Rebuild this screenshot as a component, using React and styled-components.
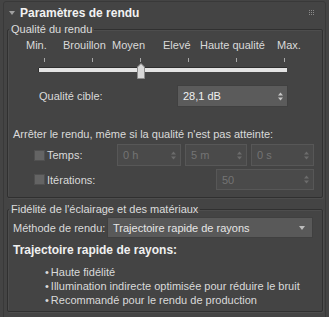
import React from "react";
import styled, { createGlobalStyle } from "styled-components";

const GlobalStyle = createGlobalStyle`
  html, body {
    margin: 0;
    padding: 0;
    background: #444444;
  }
  body {
    font-family: "Liberation Sans", Arial, sans-serif;
    font-size: 11px;
    color: #dadada;
  }
`;

const Page = styled.div`
  width: 329px;
  height: 317px;
  background: #444444;
  overflow: hidden;
  padding-top: 1px;
  box-sizing: border-box;
`;

const Rollout = styled.div`
  margin-left: 3px;
  width: 323px;
  height: 320px;
  box-sizing: border-box;
  border: 1px solid #393939;
  border-radius: 3px 3px 0 0;
`;

const Header = styled.div`
  height: 21px;
  display: flex;
  align-items: center;
  padding: 0 5px 0 5px;
`;

const Caret = styled.svg`
  width: 6px;
  height: 4px;
  margin-right: 5px;
  flex: none;
`;

const HeaderTitle = styled.div`
  font-size: 12px;
  font-weight: bold;
  color: #f2f2f2;
  flex: 1;
`;

const Grip = styled.svg`
  width: 5px;
  height: 5px;
  margin-right: 6px;
  margin-top: -1px;
`;

const Group = styled.fieldset`
  margin: ${(p) => p.$top || 0}px 0 0 3px;
  padding: 0 0 ${(p) => p.$bottom || 0}px 0;
  width: 316px;
  box-sizing: border-box;
  border: 1px solid #303030;
  border-radius: 2px;
  box-shadow: inset 1px 1px 0 #4d4d4d, 1px 1px 0 #4d4d4d;
  min-width: 0;
`;

const Legend = styled.legend`
  padding: 0 2px;
  margin-left: 1px;
  font-size: 11px;
  line-height: 13px;
  color: #dcdcdc;
`;

const Text = styled.div`
  line-height: 13px;
  margin-top: ${(p) => p.$top || 0}px;
  padding-left: ${(p) => p.$left || 0}px;
  white-space: nowrap;
`;

const LevelLabels = styled.div`
  display: grid;
  grid-template-columns: 37px 49px 51px 37px 77px auto;
  padding-left: 18px;
  margin-top: 3px;
  line-height: 13px;
  white-space: nowrap;
`;

const Ticks = styled.div`
  display: flex;
  gap: 47px;
  padding-left: 36px;
  margin-top: 6px;
  height: 4px;
`;

const Tick = styled.div`
  width: 1px;
  height: 4px;
  background: #a8a8a8;
`;

const Slider = styled.div`
  position: relative;
  margin: 1px 0 0 31px;
  width: 248px;
  height: 16px;
`;

const Track = styled.div`
  position: absolute;
  left: 0;
  right: 0;
  top: 5px;
  height: 4px;
  background: #e4e4e4;
  box-shadow: 0 -1px 0 #2e2e2e, -1px 0 0 #2e2e2e;
`;

const Thumb = styled.svg`
  position: absolute;
  left: 98px;
  top: 0;
  width: 8px;
  height: 16px;
`;

const Row = styled.div`
  display: flex;
  align-items: center;
  margin-top: ${(p) => p.$top || 0}px;
  padding-left: ${(p) => p.$left || 0}px;
  height: ${(p) => p.$h || 22}px;
`;

const Label = styled.div`
  width: ${(p) => p.$w}px;
  flex: none;
  white-space: nowrap;
`;

const Spinner = styled.div`
  width: ${(p) => p.$w}px;
  margin-left: ${(p) => p.$ml || 0}px;
  height: 100%;
  box-sizing: border-box;
  display: flex;
  align-items: center;
  justify-content: space-between;
  padding: 0 4px 0 5px;
  flex: none;
  background: ${(p) => (p.$disabled ? "#4a4a4a" : "#5b5b5b")};
  border: 1px solid ${(p) => (p.$disabled ? "#575757" : "#404040")};
  color: ${(p) => (p.$disabled ? "#747474" : "#f0f0f0")};
`;

const Arrows = styled.svg`
  width: 5px;
  height: 9px;
  flex: none;
`;

const Check = styled.div`
  width: 11px;
  height: 11px;
  box-sizing: border-box;
  background: #646464;
  border: 1px solid #505050;
  flex: none;
  margin-right: 2px;
`;

const Select = styled.div`
  width: 206px;
  height: 21px;
  box-sizing: border-box;
  display: flex;
  align-items: center;
  justify-content: space-between;
  padding: 0 7px 0 5px;
  background: #595959;
  border: 1px solid #404040;
  color: #e6e6e6;
`;

const Heading = styled.div`
  font-size: 12px;
  font-weight: bold;
  line-height: 14px;
  color: #f0f0f0;
  margin-top: 5px;
  padding-left: 5px;
`;

const Bullets = styled.ul`
  list-style: none;
  margin: 8px 0 4px 0;
  padding: 0 0 0 37px;
  line-height: 14px;
  white-space: nowrap;
`;

const Bullet = styled.li`
  &::before {
    content: "•";
    margin-right: 2px;
  }
`;

const SpinArrows = ({ dim }) => (
  <Arrows viewBox="0 0 5 9">
    <path d="M0 3.5 L2.5 0.5 L5 3.5 Z M0 5.5 L2.5 8.5 L5 5.5 Z" fill={dim ? "#6c6c6c" : "#c8c8c8"} />
  </Arrows>
);

const levels = ["Min.", "Brouillon", "Moyen", "Elevé", "Haute qualité", "Max."];

export default function App() {
  return (
    <Page>
      <GlobalStyle />
      <Rollout>
        <Header>
          <Caret viewBox="0 0 6 4">
            <path d="M0 0 H6 L3 4 Z" fill="#a0a0a0" />
          </Caret>
          <HeaderTitle>Paramètres de rendu</HeaderTitle>
          <Grip viewBox="0 0 5 5">
            {[0, 2, 4].map((y) =>
              [0, 2, 4].map((x) => <rect key={`${x}${y}`} x={x} y={y} width="1" height="1" fill="#8a8a8a" />)
            )}
          </Grip>
        </Header>

        <Group $bottom={7}>
          <Legend>Qualité du rendu</Legend>
          <LevelLabels>
            {levels.map((l) => (
              <span key={l}>{l}</span>
            ))}
          </LevelLabels>
          <Ticks>
            {levels.map((l) => (
              <Tick key={l} />
            ))}
          </Ticks>
          <Slider>
            <Track />
            <Thumb viewBox="0 0 8 16">
              <path d="M0.5 4 L4 0.5 L7.5 4 V15.5 H0.5 Z" fill="#d8d8d8" stroke="#8c8c8c" />
            </Thumb>
          </Slider>
          <Row $top={6} $left={31}>
            <Label $w={138}>Qualité cible:</Label>
            <Spinner $w={111}>
              <span>28,1 dB</span>
              <SpinArrows />
            </Spinner>
          </Row>
          <Text $top={21} $left={5}>
            Arrêter le rendu, même si la qualité n'est pas atteinte:
          </Text>
          <Row $top={3} $left={26}>
            <Check />
            <Label $w={70}>Temps:</Label>
            <Spinner $w={64} $disabled>
              <span>0 h</span>
              <SpinArrows dim />
            </Spinner>
            <Spinner $w={62} $ml={4} $disabled>
              <span>5 m</span>
              <SpinArrows dim />
            </Spinner>
            <Spinner $w={63} $ml={4} $disabled>
              <span>0 s</span>
              <SpinArrows dim />
            </Spinner>
          </Row>
          <Row $top={3} $left={26} $h={21}>
            <Check />
            <Label $w={169}>Itérations:</Label>
            <Spinner $w={98} $disabled>
              <span>50</span>
              <SpinArrows dim />
            </Spinner>
          </Row>
        </Group>

        <Group $top={5}>
          <Legend>Fidélité de l'éclairage et des matériaux</Legend>
          <Row $top={1} $left={5} $h={21}>
            <Label $w={94}>Méthode de rendu:</Label>
            <Select>
              <span>Trajectoire rapide de rayons</span>
              <svg width="6" height="4" viewBox="0 0 6 4">
                <path d="M0 0 H6 L3 4 Z" fill="#bdbdbd" />
              </svg>
            </Select>
          </Row>
          <Heading>Trajectoire rapide de rayons:</Heading>
          <Bullets>
            <Bullet>Haute fidélité</Bullet>
            <Bullet>Illumination indirecte optimisée pour réduire le bruit</Bullet>
            <Bullet>Recommandé pour le rendu de production</Bullet>
          </Bullets>
        </Group>
      </Rollout>
    </Page>
  );
}
